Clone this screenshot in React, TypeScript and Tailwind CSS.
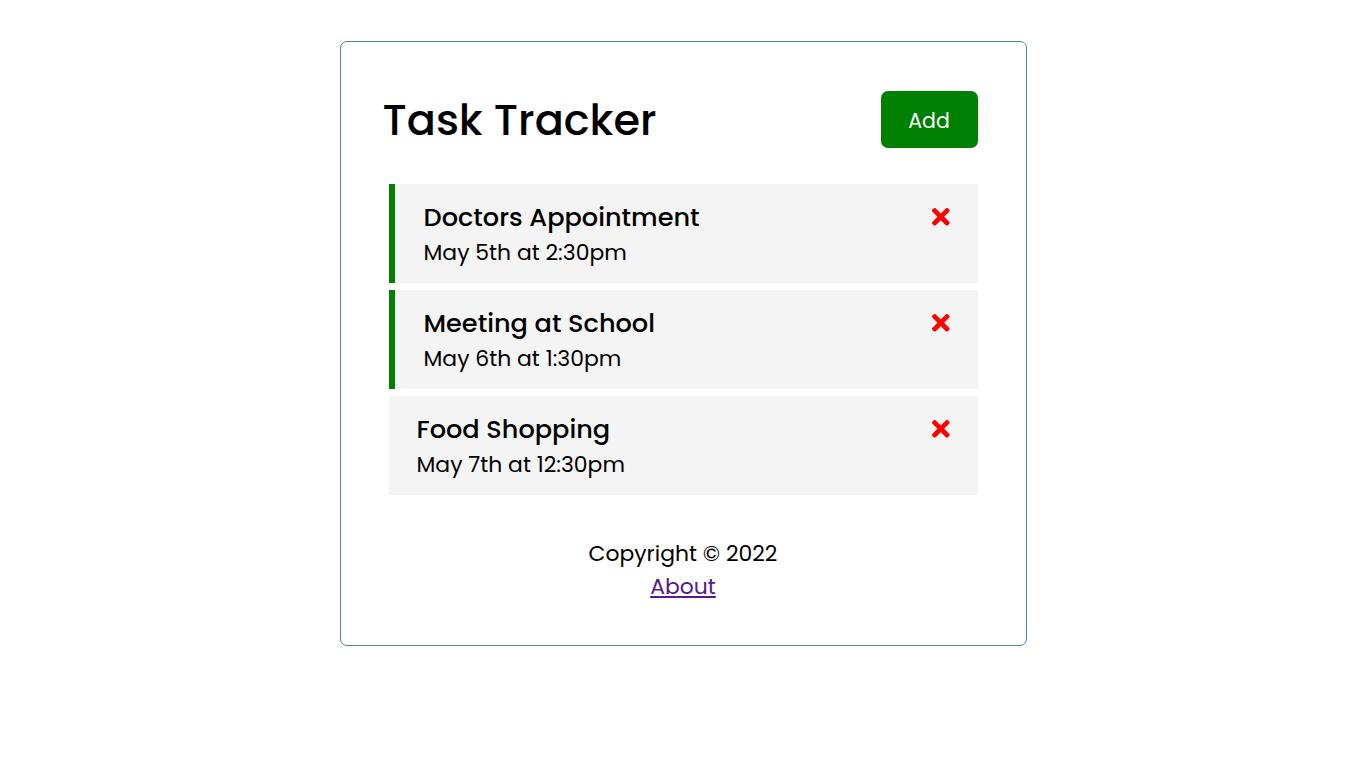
import React from 'react';
import { FaTimes } from 'react-icons/fa';

interface Task {
  id: number;
  text: string;
  day: string;
  reminder: boolean;
}

const tasks: Task[] = [
  { id: 1, text: 'Doctors Appointment', day: 'May 5th at 2:30pm', reminder: true },
  { id: 2, text: 'Meeting at School', day: 'May 6th at 1:30pm', reminder: true },
  { id: 3, text: 'Food Shopping', day: 'May 7th at 12:30pm', reminder: false },
];

const TaskItem: React.FC<{ task: Task }> = ({ task }) => (
  <div
    className={`h-[99px] bg-[#f4f4f4] py-[14px] pl-[28px] pr-[24px] ${
      task.reminder ? 'border-l-[6px] border-[#008000]' : ''
    }`}
  >
    <h3 className="flex items-center justify-between text-[25.6px] leading-[38px] font-medium">
      <span className={task.reminder ? 'ml-[1px]' : ''}>{task.text}</span>
      <FaTimes className="text-[#ff0000] cursor-pointer" />
    </h3>
    <p className={`text-[21.9px] leading-[33px] ${task.reminder ? 'ml-[1px]' : ''}`}>{task.day}</p>
  </div>
);

export default function App() {
  return (
    <div
      className="min-h-screen bg-white text-black pt-[41px]"
      style={{ fontFamily: '"Poppins", "Inter", "Noto Sans", sans-serif' }}
    >
      <div className="mx-auto w-[687px] border border-[#4682b4] rounded-[7px] p-[42px]">
        <header className="flex items-center justify-between mb-[29px]">
          <h1 className="text-[43px] font-medium leading-[66px]">Task Tracker</h1>
          <button className="my-[7px] mr-[6px] h-[57px] w-[97px] rounded-[7px] bg-[#008000] text-white text-[20.5px] pt-[2px] leading-[55px]">
            Add
          </button>
        </header>
        <div className="flex flex-col gap-[7px] mx-[6px]">
          {tasks.map((t) => (
            <TaskItem key={t.id} task={t} />
          ))}
        </div>
        <footer className="mt-[42px] text-center text-[21.9px] leading-[33px]">
          <p>Copyright &copy; 2022</p>
          <a href="#" className="text-[#551a8b] underline">
            About
          </a>
        </footer>
      </div>
    </div>
  );
}
